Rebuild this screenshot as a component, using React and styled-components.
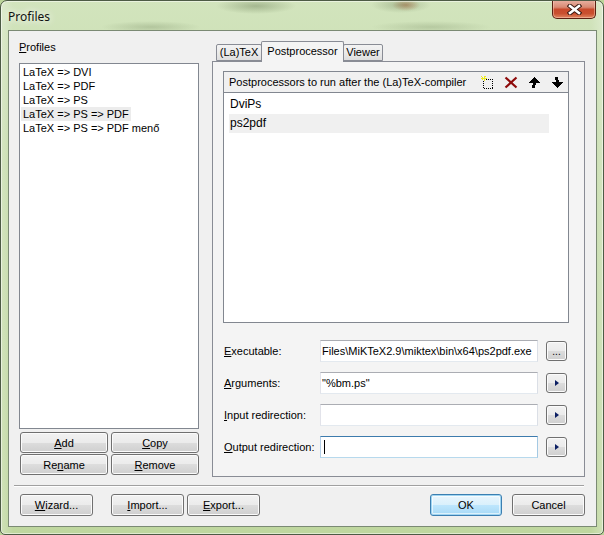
import React from "react"
import styled, { createGlobalStyle, css } from "styled-components"

const GlobalStyle = createGlobalStyle`
  html, body {
    margin: 0;
    padding: 0;
  }
  body {
    width: 604px;
    height: 535px;
    overflow: hidden;
    background: #bcd59a;
    font-family: "Liberation Sans", Arial, sans-serif;
    font-size: 11px;
    color: #000;
  }
  * {
    box-sizing: border-box;
  }
`

const Window = styled.div`
  width: 604px;
  height: 535px;
  display: flex;
  flex-direction: column;
  border: 1px solid #4d5b45;
  border-radius: 7px 7px 5px 5px;
  overflow: hidden;
  box-shadow: inset 0 0 0 1px rgba(255, 255, 255, 0.5);
  background:
    radial-gradient(ellipse 40px 8px at 255px 5px, rgba(80, 100, 60, 0.35), transparent),
    radial-gradient(ellipse 30px 8px at 400px 4px, rgba(80, 100, 60, 0.3), transparent),
    radial-gradient(ellipse 14px 6px at 405px 4px, rgba(180, 80, 40, 0.45), transparent),
    radial-gradient(ellipse 50px 6px at 150px 26px, rgba(90, 110, 70, 0.25), transparent),
    radial-gradient(ellipse 60px 6px at 430px 26px, rgba(90, 110, 70, 0.22), transparent),
    linear-gradient(90deg, rgba(255, 255, 255, 0.25), transparent 2%, transparent 98%, rgba(255, 255, 255, 0.25)),
    linear-gradient(180deg, #d2e4bd 0%, #c6dcac 30%, #bfd79f 100%);
`

const TitleBar = styled.div`
  height: 29px;
  display: flex;
  justify-content: space-between;
  align-items: flex-start;
`

const Title = styled.div`
  padding: 9px 0 0 7px;
  font-family: "Noto Sans", "Open Sans", sans-serif;
  font-size: 12px;
  line-height: 14px;
  color: #111;
  text-shadow: 0 0 7px rgba(255, 255, 255, 0.9), 0 0 10px rgba(255, 255, 255, 0.8);
`

const CloseButton = styled.div`
  width: 44px;
  height: 19px;
  margin: -1px 7px 0 0;
  border: 1px solid #5a2012;
  border-top: none;
  border-radius: 0 0 5px 5px;
  display: flex;
  align-items: center;
  justify-content: center;
  background: linear-gradient(180deg, #eab3a4 0%, #d88a74 40%, #c84a2c 52%, #c9502f 75%, #e08560 100%);
  box-shadow: inset 0 0 0 1px rgba(255, 220, 200, 0.45);
`

const Client = styled.div`
  flex: 1;
  margin: 0 6px 7px 7px;
  border: 1px solid #7b8a74;
  background: #f0f0f0;
  display: flex;
  flex-direction: column;
  padding: 10px 11px 0 10px;
`

const Main = styled.div`
  height: 436px;
  display: flex;
  gap: 13px;
`

const LeftCol = styled.div`
  width: 180px;
  display: flex;
  flex-direction: column;
`

const CaptionLabel = styled.div`
  height: 13px;
  line-height: 13px;
  margin-bottom: 9px;
`

const U = styled.span`
  text-decoration: underline;
  text-underline-offset: 1px;
`

const ListBox = styled.div`
  height: 366px;
  border: 1px solid #828790;
  background: #fff;
  padding: 1px;
  display: flex;
  flex-direction: column;
`

const ProfileItem = styled.div`
  align-self: flex-start;
  height: 14px;
  line-height: 14px;
  padding: 0 2px;
  white-space: nowrap;
  background: ${p => (p.$selected ? "#ececec" : "transparent")};
`

const ButtonGrid = styled.div`
  display: grid;
  grid-template-columns: 88px 88px;
  gap: 1px 3px;
  margin: 3px 0 0 1px;
`

const Button = styled.div`
  width: ${p => (p.$w ? `${p.$w}px` : "auto")};
  height: ${p => p.$h || 21}px;
  margin-left: ${p => p.$ml || 0}px;
  border: 1px solid #707070;
  border-radius: 3px;
  display: flex;
  align-items: center;
  justify-content: center;
  white-space: nowrap;
  background: linear-gradient(180deg, #f2f2f2 0%, #ebebeb 50%, #dddddd 50%, #cfcfcf 100%);
  box-shadow: inset 0 0 0 1px #fbfbfb;
  ${p =>
    p.$default &&
    css`
      border-color: #3c7fb1;
      background: linear-gradient(180deg, #eaf6fd 0%, #d9f0fc 50%, #bee6fd 50%, #a7d9f5 100%);
      box-shadow: inset 0 0 0 1px #9fd5f2, inset 0 0 0 2px rgba(255, 255, 255, 0.6);
    `}
`

const RightCol = styled.div`
  width: 373px;
  display: flex;
  flex-direction: column;
`

const TabStrip = styled.div`
  height: 20px;
  display: flex;
  align-items: flex-end;
  padding-left: 4px;
  position: relative;
  z-index: 1;
`

const Tab = styled.div`
  width: ${p => p.$w}px;
  height: ${p => (p.$active ? 21 : 17)}px;
  margin: 0 -1px ${p => (p.$active ? -1 : 0)}px 0;
  border: 1px solid #898c95;
  border-bottom: ${p => (p.$active ? "none" : "1px solid #898c95")};
  border-radius: 2px 2px 0 0;
  text-align: center;
  line-height: ${p => (p.$active ? 18 : 15)}px;
  position: relative;
  z-index: ${p => (p.$active ? 2 : 1)};
  background: ${p => (p.$active ? "#f4f4f4" : "linear-gradient(180deg, #f3f3f3 0%, #ebebeb 50%, #dedede 100%)")};
`

const Panel = styled.div`
  flex: 1;
  border: 1px solid #898c95;
  background: #f4f4f4;
  padding: 9px 15px 0 10px;
  display: flex;
  flex-direction: column;
`

const Group = styled.div`
  height: 252px;
  border: 1px solid #828790;
  display: flex;
  flex-direction: column;
`

const GroupHeader = styled.div`
  height: 21px;
  display: flex;
  align-items: center;
  padding-left: 5px;
  background: #f0f0f0;
  border-bottom: 1px solid #828790;
`

const IconBar = styled.div`
  margin-left: auto;
  display: flex;
`

const IconSlot = styled.div`
  width: 23px;
  height: 20px;
  display: flex;
  align-items: center;
  justify-content: center;
`

const PostList = styled.div`
  flex: 1;
  background: #fff;
  padding: 2px 0 0 5px;
`

const PostItem = styled.div`
  width: 320px;
  height: 19px;
  line-height: 19px;
  padding-left: 1px;
  font-size: 12px;
  background: ${p => (p.$selected ? "#f0f0f0" : "transparent")};
`

const Fields = styled.div`
  margin-top: 17px;
  padding-left: 1px;
  display: grid;
  grid-template-columns: 88px 218px 21px;
  column-gap: 8px;
  row-gap: 10px;
  align-items: center;
`

const FieldLabel = styled.div`
  white-space: nowrap;
`

const TextBox = styled.div`
  height: 22px;
  border: 1px solid;
  border-color: ${p => (p.$focused ? "#3d7bad #a4c9e3 #b7d9ed #b5cfe7" : "#abadb3 #dbdfe6 #e3e9ef #e2e3ea")};
  background: #fff;
  padding: 0 1px 0 1px;
  line-height: 20px;
  white-space: nowrap;
  overflow: hidden;
  display: flex;
  align-items: center;
`

const Caret = styled.span`
  width: 1px;
  height: 14px;
  margin-left: 2px;
  background: #000;
`

const SmallButton = styled(Button)`
  width: 21px;
  height: 20px;
  align-items: ${p => (p.$dots ? "flex-end" : "center")};
  padding-bottom: ${p => (p.$dots ? 3 : 0)}px;
  font-size: 10px;
  line-height: 10px;
`

const ArrowRight = styled.span`
  width: 0;
  height: 0;
  border-left: 4px solid #0c1f63;
  border-top: 3.5px solid transparent;
  border-bottom: 3.5px solid transparent;
  margin-left: 1px;
`

const Separator = styled.div`
  margin: 8px 1px 0 -5px;
  height: 2px;
  border-top: 1px solid #a0a0a0;
  border-bottom: 1px solid #fff;
`

const BottomBar = styled.div`
  margin-top: 7px;
  padding-left: 1px;
  display: flex;
`

const Spacer = styled.div`
  flex: 1;
`

const CloseGlyph = () => (
  <svg width="15" height="11" viewBox="0 0 15 11">
    <path d="M3 2L12 9M12 2L3 9" stroke="#3b1a12" strokeWidth="4.6" strokeLinecap="square" />
    <path d="M3 2L12 9M12 2L3 9" stroke="#fff" strokeWidth="2.6" strokeLinecap="square" />
  </svg>
)

const NewIcon = () => (
  <svg width="13" height="13" viewBox="0 0 13 13" shapeRendering="crispEdges">
    <rect x="2.5" y="3.5" width="9" height="9" fill="none" stroke="#000" strokeDasharray="1 1" />
    <path d="M0 2.5h6M3 0v5M0.5 0.5l4 4M4.5 0.5l-4 4" stroke="#eeea20" />
  </svg>
)

const DeleteIcon = () => (
  <svg width="14" height="13" viewBox="0 0 14 13">
    <path d="M1.5 1.5L12.5 11.5M12.5 1.5L1.5 11.5" stroke="#8e0b0b" strokeWidth="2.2" />
  </svg>
)

const UpIcon = () => (
  <svg width="12" height="11" viewBox="0 0 12 11" shapeRendering="crispEdges">
    <polygon points="6,0 12,6 8,6 7,11 4,11 5,6 0,6" fill="#000" />
  </svg>
)

const DownIcon = () => (
  <svg width="12" height="11" viewBox="0 0 12 11" shapeRendering="crispEdges">
    <polygon points="6,11 12,5 8,5 7,0 4,0 5,5 0,5" fill="#000" />
  </svg>
)

const profiles = [
  "LaTeX => DVI",
  "LaTeX => PDF",
  "LaTeX => PS",
  "LaTeX => PS => PDF",
  "LaTeX => PS => PDF menő",
]

const postprocessors = ["DviPs", "ps2pdf"]

const tabs = [
  { label: "(La)TeX", w: 46 },
  { label: "Postprocessor", w: 83, active: true },
  { label: "Viewer", w: 40 },
]

const App = () => {
  return (
    <>
      <GlobalStyle />
      <Window>
        <TitleBar>
          <Title>Profiles</Title>
          <CloseButton>
            <CloseGlyph />
          </CloseButton>
        </TitleBar>
        <Client>
          <Main>
            <LeftCol>
              <CaptionLabel>
                <U>P</U>rofiles
              </CaptionLabel>
              <ListBox>
                {profiles.map((p, i) => (
                  <ProfileItem key={p} $selected={i === 3}>
                    {p}
                  </ProfileItem>
                ))}
              </ListBox>
              <ButtonGrid>
                <Button><U>A</U>dd</Button>
                <Button><U>C</U>opy</Button>
                <Button>Re<U>n</U>ame</Button>
                <Button><U>R</U>emove</Button>
              </ButtonGrid>
            </LeftCol>
            <RightCol>
              <TabStrip>
                {tabs.map(t => (
                  <Tab key={t.label} $w={t.w} $active={t.active}>
                    {t.label}
                  </Tab>
                ))}
              </TabStrip>
              <Panel>
                <Group>
                  <GroupHeader>
                    Postprocessors to run after the (La)TeX-compiler
                    <IconBar>
                      <IconSlot><NewIcon /></IconSlot>
                      <IconSlot><DeleteIcon /></IconSlot>
                      <IconSlot><UpIcon /></IconSlot>
                      <IconSlot><DownIcon /></IconSlot>
                    </IconBar>
                  </GroupHeader>
                  <PostList>
                    {postprocessors.map((p, i) => (
                      <PostItem key={p} $selected={i === 1}>
                        {p}
                      </PostItem>
                    ))}
                  </PostList>
                </Group>
                <Fields>
                  <FieldLabel><U>E</U>xecutable:</FieldLabel>
                  <TextBox>Files\MiKTeX2.9\miktex\bin\x64\ps2pdf.exe</TextBox>
                  <SmallButton $dots>...</SmallButton>

                  <FieldLabel><U>A</U>rguments:</FieldLabel>
                  <TextBox>"%bm.ps"</TextBox>
                  <SmallButton><ArrowRight /></SmallButton>

                  <FieldLabel><U>I</U>nput redirection:</FieldLabel>
                  <TextBox />
                  <SmallButton><ArrowRight /></SmallButton>

                  <FieldLabel><U>O</U>utput redirection:</FieldLabel>
                  <TextBox $focused><Caret /></TextBox>
                  <SmallButton><ArrowRight /></SmallButton>
                </Fields>
              </Panel>
            </RightCol>
          </Main>
          <Separator />
          <BottomBar>
            <Button $w={73} $h={22}><U>W</U>izard...</Button>
            <Button $w={73} $h={22} $ml={18}><U>I</U>mport...</Button>
            <Button $w={73} $h={22} $ml={3}><U>E</U>xport...</Button>
            <Spacer />
            <Button $w={72} $h={22} $default>OK</Button>
            <Button $w={73} $h={22} $ml={10}>Cancel</Button>
          </BottomBar>
        </Client>
      </Window>
    </>
  )
}

export default App
